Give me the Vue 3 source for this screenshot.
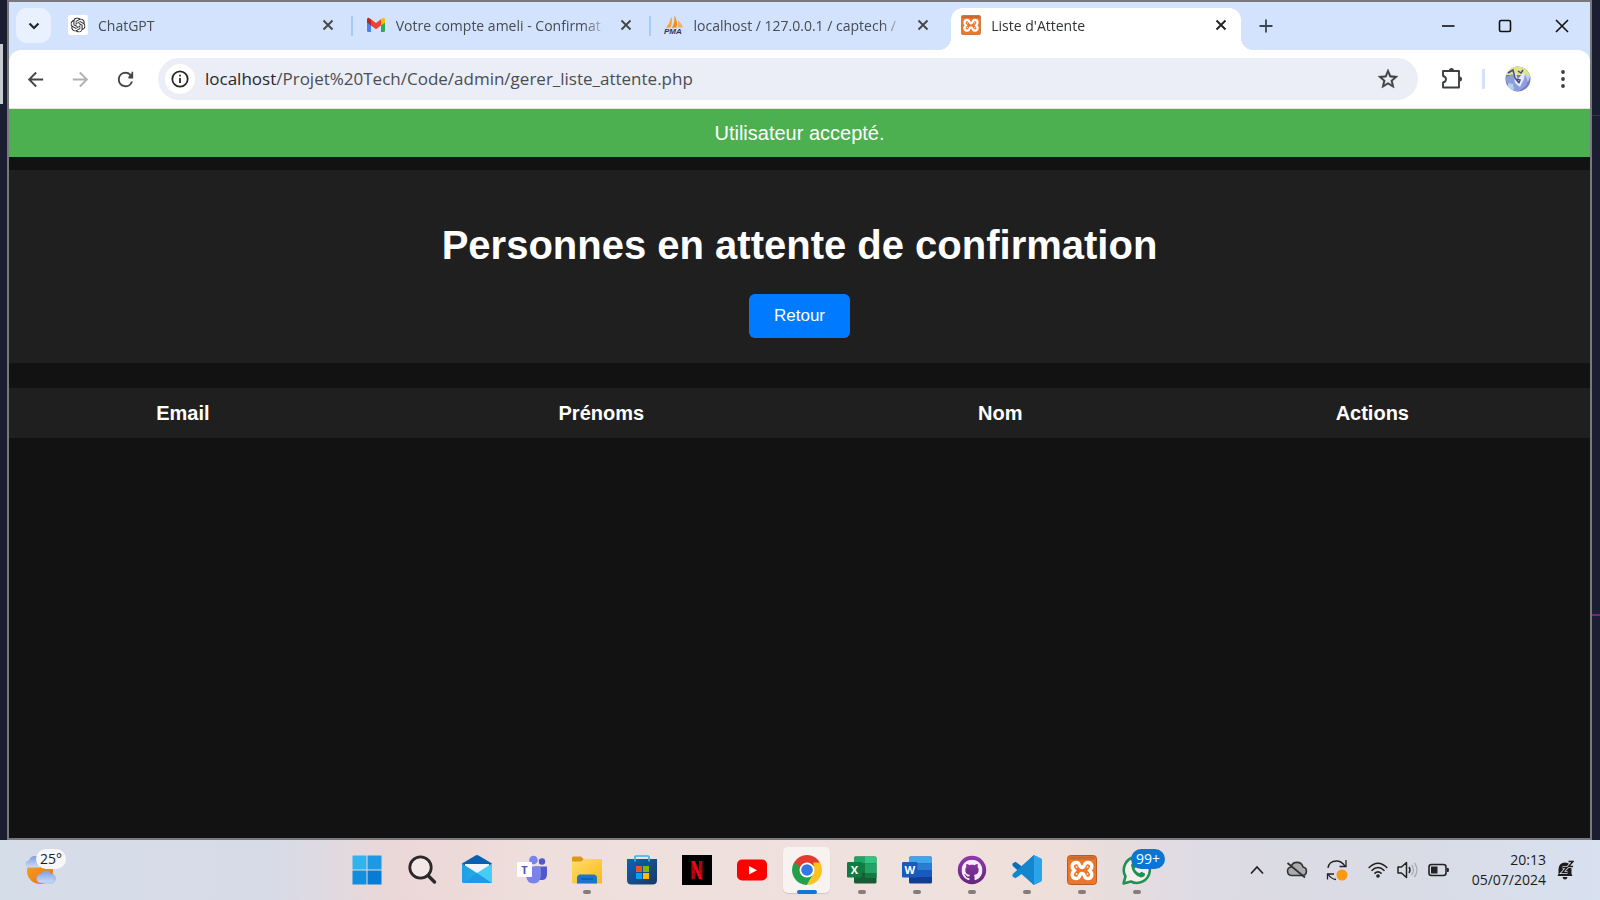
<script setup>
const columns = ['Email', 'Prénoms', 'Nom', 'Actions']
</script>

<template>
  <div class="desktop">
    <svg width="0" height="0" class="defs" aria-hidden="true">
      <defs>
        <linearGradient id="g-folder" x1="0" y1="0" x2="1" y2="1">
          <stop offset="0" stop-color="#ffdc6b" /><stop offset="1" stop-color="#fbb917" />
        </linearGradient>
        <linearGradient id="g-store" x1="0" y1="0" x2="1" y2="1">
          <stop offset="0" stop-color="#0c63b8" /><stop offset="1" stop-color="#1c3765" />
        </linearGradient>
        <linearGradient id="g-mail" x1="0" y1="0" x2="1" y2="0">
          <stop offset="0" stop-color="#1d9fe6" /><stop offset="1" stop-color="#2fb4f0" />
        </linearGradient>
        <linearGradient id="g-git" x1="0" y1="0" x2="0" y2="1">
          <stop offset="0" stop-color="#9238ad" /><stop offset="1" stop-color="#62277c" />
        </linearGradient>
        <linearGradient id="g-sun" x1="0" y1="0" x2="1" y2="1">
          <stop offset="0" stop-color="#f9a51f" /><stop offset="1" stop-color="#e86f17" />
        </linearGradient>
        <linearGradient id="g-cloud" x1="0" y1="0" x2="0" y2="1">
          <stop offset="0" stop-color="#7f9fdc" /><stop offset="1" stop-color="#c9dcfa" />
        </linearGradient>
        <symbol id="xampp" viewBox="0 0 30 30">
          <rect x="0.5" y="0.5" width="29" height="29" rx="3" fill="#ee762a" stroke="#b85c22" />
          <rect x="2" y="1.5" width="26" height="3" rx="1" fill="#c46a35" />
          <path d="M9.500 7.500C4.500 7.500 4 12.500 7.300 15.500C4 18.500 4.500 23.500 9.500 23.500C13.500 23.500 12 18.500 15 18.500C18 18.500 16.500 23.500 20.500 23.500C25.500 23.500 26 18.500 22.700 15.500C26 12.500 25.500 7.500 20.500 7.500C16.500 7.500 18 12.500 15 12.500C12 12.500 13.500 7.500 9.500 7.500Z" fill="none" stroke="#fff" stroke-width="3.4" />
          <path d="M9.500 11.200v1.600M9.500 18.200v1.600M20.500 11.200v1.600M20.500 18.200v1.600" stroke="#fff" stroke-width="1.500" />
        </symbol>
        <symbol id="cross" viewBox="0 0 12 12">
          <path d="M1.500 1.500l9 9M10.500 1.500l-9 9" fill="none" stroke="currentColor" stroke-width="1.9" />
        </symbol>
      </defs>
    </svg>

    <span class="edge-panel"></span>
    <span class="edge-line"></span>
    <span class="edge-accent"></span>

    <div class="window">
      <div class="tabstrip">
        <button class="tab-search" aria-label="Rechercher dans les onglets">
          <svg width="12" height="8" viewBox="0 0 12 8"><path d="M1.500 1.500L6 6l4.500-4.500" fill="none" stroke="#1f2733" stroke-width="2.2" /></svg>
        </button>
        <div class="tabs">
          <div class="tab">
            <svg class="favicon" viewBox="0 0 20 20">
              <rect width="20" height="20" rx="2" fill="#fff" />
              <svg x="2.500" y="2.500" width="15" height="15" viewBox="0 0 24 24"><path fill="#222" d="M22.2819 9.8211a5.9847 5.9847 0 0 0-.5157-4.9108 6.0462 6.0462 0 0 0-6.5098-2.9A6.0651 6.0651 0 0 0 4.9807 4.1818a5.9847 5.9847 0 0 0-3.9977 2.9 6.0462 6.0462 0 0 0 .7427 7.0966 5.98 5.98 0 0 0 .511 4.9107 6.051 6.051 0 0 0 6.5146 2.9001A5.9847 5.9847 0 0 0 13.2599 24a6.0557 6.0557 0 0 0 5.7718-4.2058 5.9894 5.9894 0 0 0 3.9977-2.9001 6.0557 6.0557 0 0 0-.7475-7.0729zm-9.022 12.6081a4.4755 4.4755 0 0 1-2.8764-1.0408l.1419-.0804 4.7783-2.7582a.7948.7948 0 0 0 .3927-.6813v-6.7369l2.02 1.1686a.071.071 0 0 1 .038.052v5.5826a4.504 4.504 0 0 1-4.4945 4.4944zm-9.6607-4.1254a4.4708 4.4708 0 0 1-.5346-3.0137l.142.0852 4.783 2.7582a.7712.7712 0 0 0 .7806 0l5.8428-3.3685v2.3324a.0804.0804 0 0 1-.0332.0615L9.74 19.9502a4.4992 4.4992 0 0 1-6.1408-1.6464zM2.3408 7.8956a4.485 4.485 0 0 1 2.3655-1.9728V11.6a.7664.7664 0 0 0 .3879.6765l5.8144 3.3543-2.0201 1.1685a.0757.0757 0 0 1-.071 0l-4.8303-2.7865A4.504 4.504 0 0 1 2.3408 7.872zm16.5963 3.8558L13.1038 8.364 15.1192 7.2a.0757.0757 0 0 1 .071 0l4.8303 2.7913a4.4944 4.4944 0 0 1-.6765 8.1042v-5.6772a.79.79 0 0 0-.407-.667zm2.0107-3.0231l-.142-.0852-4.7735-2.7818a.7759.7759 0 0 0-.7854 0L9.409 9.2297V6.8974a.0662.0662 0 0 1 .0284-.0615l4.8303-2.7866a4.4992 4.4992 0 0 1 6.6802 4.66zM8.3065 12.863l-2.02-1.1638a.0804.0804 0 0 1-.038-.0567V6.0742a4.4992 4.4992 0 0 1 7.3757-3.4537l-.142.0805L8.704 5.459a.7948.7948 0 0 0-.3927.6813zm1.0976-2.3654l2.602-1.4998 2.6069 1.4998v2.9994l-2.5974 1.4997-2.6067-1.4997Z" /></svg>
            </svg>
            <span class="tab-title">ChatGPT</span>
            <button class="tab-close" aria-label="Fermer ChatGPT"><svg width="12" height="12"><use href="#cross" /></svg></button>
          </div>
          <div class="tab">
            <svg class="favicon" viewBox="0 0 20 20">
              <path d="M1 4.500v11.200q0 1.300 1.300 1.300H5V7.500z" fill="#4285f4" />
              <path d="M19 4.500v11.200q0 1.300-1.300 1.300H15V7.500z" fill="#34a853" />
              <path d="M15 4.300L16.200 3.400Q19 1.800 19 5v2.500l-4 3z" fill="#fbbc04" />
              <path d="M5 4.300L3.800 3.400Q1 1.800 1 5v2.500l4 3z" fill="#c5221f" />
              <path d="M5 4.200l5 3.900 5-3.900v6.200l-5 3.800-5-3.800z" fill="#ea4335" />
            </svg>
            <span class="tab-title">Votre compte ameli - Confirmat</span>
            <button class="tab-close" aria-label="Fermer Votre compte ameli"><svg width="12" height="12"><use href="#cross" /></svg></button>
          </div>
          <div class="tab">
            <svg class="favicon" viewBox="0 0 20 20">
              <path d="M7.500 1.500Q8.500 8 6.500 12.500L2 13Q6 8 7.500 1.500z" fill="#f5a03a" />
              <path d="M10.500 0Q14 7 12.500 12.500L8 13Q11 7 10.500 0z" fill="#f29111" />
              <path d="M14 5Q18 9 19 12.500h-5.500Q15 9 14 5z" fill="#f5b05a" />
              <text x="0" y="18.500" font-size="8" font-weight="700" font-style="italic" fill="#34345c" font-family="Liberation Sans, sans-serif">PMA</text>
            </svg>
            <span class="tab-title">localhost / 127.0.0.1 / captech /</span>
            <button class="tab-close" aria-label="Fermer localhost"><svg width="12" height="12"><use href="#cross" /></svg></button>
          </div>
          <div class="tab active">
            <svg class="favicon" viewBox="0 0 30 30"><use href="#xampp" /></svg>
            <span class="tab-title">Liste d'Attente</span>
            <button class="tab-close" aria-label="Fermer Liste d'Attente"><svg width="12" height="12"><use href="#cross" /></svg></button>
          </div>
        </div>
        <button class="new-tab" aria-label="Nouvel onglet">
          <svg width="14" height="14" viewBox="0 0 14 14"><path d="M7 0.500v13M0.500 7h13" stroke="#3c4450" stroke-width="1.800" /></svg>
        </button>
        <div class="win-controls">
          <button aria-label="Réduire"><svg width="14" height="14" viewBox="0 0 14 14"><path d="M1 7h12.500" stroke="#111" stroke-width="1.600" /></svg></button>
          <button aria-label="Agrandir"><svg width="14" height="14" viewBox="0 0 14 14"><rect x="1.500" y="1.500" width="11" height="11" rx="1.500" fill="none" stroke="#111" stroke-width="1.600" /></svg></button>
          <button aria-label="Fermer"><svg width="14" height="14" viewBox="0 0 14 14"><path d="M1 1l12 12M13 1L1 13" stroke="#111" stroke-width="1.600" /></svg></button>
        </div>
      </div>

      <div class="toolbar">
        <div class="nav">
          <button aria-label="Retour"><svg width="23" height="23" viewBox="0 0 24 24"><path fill="#444746" d="M20 11H7.830l5.590-5.590L12 4l-8 8 8 8 1.410-1.410L7.830 13H20z" /></svg></button>
          <button aria-label="Avancer"><svg width="23" height="23" viewBox="0 0 24 24"><path fill="#b1b2b3" d="M4 11h12.170l-5.590-5.590L12 4l8 8-8 8-1.410-1.410L16.170 13H4z" /></svg></button>
          <button aria-label="Actualiser"><svg width="23" height="23" viewBox="0 0 24 24"><path fill="#444746" d="M17.650 6.350A7.960 7.960 0 0 0 12 4a8 8 0 1 0 7.730 10h-2.080A6 6 0 1 1 12 6c1.660 0 3.140.690 4.220 1.780L15 9v2H20V4h-1.700v1.700z" /></svg></button>
        </div>
        <div class="omnibox">
          <button class="site-info" aria-label="Informations sur le site">
            <svg width="18" height="18" viewBox="0 0 18 18"><circle cx="9" cy="9" r="7.700" fill="none" stroke="#26282b" stroke-width="1.800" /><path d="M9 8v5M9 4.800v1.800" stroke="#26282b" stroke-width="1.800" /></svg>
          </button>
          <a class="url" href="#"><b>localhost</b>/Projet%20Tech/Code/admin/gerer_liste_attente.php</a>
          <button class="star" aria-label="Ajouter aux favoris">
            <svg width="24" height="24" viewBox="0 0 24 24"><path fill="#3d4043" stroke="#3d4043" stroke-width="0.400" d="M22 9.240l-7.190-.620L12 2 9.190 8.630 2 9.240l5.460 4.730L5.820 21 12 17.270 18.180 21l-1.630-7.030zM12 15.400l-3.760 2.270 1-4.280-3.320-2.880 4.380-.380L12 6.100l1.710 4.040 4.380.380-3.320 2.880 1 4.280z" /></svg>
          </button>
        </div>
        <button class="ext" aria-label="Extensions">
          <svg width="22" height="22" viewBox="0 0 22 22"><path d="M2 3h16v16.500H2v-5q3-.500 3-3.200T2 8z" fill="none" stroke="#3d4043" stroke-width="1.900" stroke-linejoin="round" /><path d="M8 2.500a2.500 2.500 0 0 1 5 0zM18.500 8.500a2.500 2.500 0 0 1 0 5z" fill="#3d4043" /></svg>
        </button>
        <span class="bar-sep"></span>
        <button class="avatar" aria-label="Profil">
          <svg width="26" height="26" viewBox="0 0 26 26">
            <clipPath id="round"><circle cx="13" cy="13" r="12.500" /></clipPath>
            <g clip-path="url(#round)">
              <rect width="26" height="26" fill="#7777bd" /><path d="M0 0h26v11l-9-2H0z" fill="#dde588" />
              <path d="M0 12l7-4 7 6 5-6 5 5-3 7-8 6-8-3z" fill="#8c9fdc" />
              <path d="M8 4l3 4 2 5 4-5 3-1-1 6-4 8-5-4z" fill="#e6e9f8" />
              <path d="M3 7l5-3 2 8 4 5M13 5l3 2 2-3M11 13l4 1-1 3" fill="none" stroke="#484b88" stroke-width="1.500" />
              <path d="M3 17l5 1 1 6-6-1zM20 8l5 3-2 5z" fill="#b4d2f2" />
            </g>
          </svg>
        </button>
        <button class="more" aria-label="Menu"><svg width="6" height="20" viewBox="0 0 6 20"><g fill="#3d4043"><circle cx="3" cy="3" r="1.900" /><circle cx="3" cy="10" r="1.900" /><circle cx="3" cy="17" r="1.900" /></g></svg></button>
      </div>

      <main class="page">
        <p class="notice">Utilisateur accepté.</p>
        <header class="page-head">
          <h1>Personnes en attente de confirmation</h1>
          <button class="back">Retour</button>
        </header>
        <table>
          <thead>
            <tr><th v-for="c in columns" :key="c" scope="col">{{ c }}</th></tr>
          </thead>
        </table>
      </main>
    </div>

    <footer class="taskbar">
      <div class="weather">
        <svg width="32" height="30" viewBox="0 0 32 30">
          <circle cx="15" cy="16" r="13" fill="url(#g-sun)" />
          <path d="M4 12.500a3.500 3.500 0 0 1 0-7A6 6 0 0 1 15 4v8.500z" fill="url(#g-cloud)" />
          <path d="M16 28a4.500 4.500 0 0 1 0-9 5.500 5.500 0 0 1 10 0 4.500 4.500 0 0 1 0 9z" fill="url(#g-cloud)" stroke="#88a5da" stroke-width="0.500" />
        </svg>
        <span class="temp">25°</span>
      </div>

      <nav class="apps">
        <button aria-label="Démarrer"><svg viewBox="0 0 30 30"><rect x="0.500" y="0.500" width="14" height="14" rx="0.500" fill="#31b4ee" /><rect x="15.500" y="0.500" width="14" height="14" fill="#1c99e2" /><rect x="0.500" y="15.500" width="14" height="14" fill="#118edd" /><rect x="15.500" y="15.500" width="14" height="14" fill="#087cd5" /></svg></button>
        <button aria-label="Rechercher"><svg viewBox="0 0 30 30"><circle cx="13.500" cy="12.500" r="10.700" fill="#ffffff66" stroke="#2b2929" stroke-width="2.800" /><path d="M21 20.500l6.500 6.500" stroke="#2b2929" stroke-width="3.400" stroke-linecap="round" /></svg></button>
        <button aria-label="Courrier"><svg viewBox="0 0 30 30"><path d="M0 8.500L13.500.500q1.500-.800 3 0L30 8.500V14H0z" fill="#0a5fae" /><path d="M3 9h24v10H3z" fill="#f1f5fb" /><path d="M0 8.500L15 18l15 10H1.500Q0 28 0 26.500z" fill="url(#g-mail)" /><path d="M30 8.500L15 18l15 10z" fill="#45cdf7" /><path d="M15 18l15 10H2z" fill="#209be3" /></svg></button>
        <button aria-label="Teams"><svg viewBox="0 0 30 30"><circle cx="16.500" cy="5" r="4.300" fill="#7b83eb" /><circle cx="25" cy="6.500" r="3.200" fill="#5059c9" /><path d="M17 11.500h13v8.500q-.500 5-5 5h-5z" fill="#5059c9" /><path d="M9 11.500h13.500q1.500 0 1.500 1.500v8q-1 7.500-7.500 7.500T9 21z" fill="#7b83eb" /><rect x="0" y="7" width="15" height="15" rx="1" fill="#fff" /><text x="7.500" y="18.500" text-anchor="middle" font-size="11" font-weight="700" fill="#4b53bc" font-family="Open Sans, sans-serif">T</text></svg></button>
        <button class="running" aria-label="Explorateur de fichiers"><svg viewBox="0 0 30 30"><path d="M0 3q0-1.500 1.500-1.500H9L12 4.500V9H0z" fill="#d99a0b" /><path d="M0 6.500h9l3-2.500h17q1.500 0 1.500 1.500V27q0 1.500-1.500 1.500H1.500Q0 28.500 0 27z" fill="url(#g-folder)" /><path d="M5 28.500V23q0-3.500 3.500-3.500h13Q25 19.500 25 23v5.500z" fill="#1976cc" /><path d="M9 24h12" stroke="#0b57a0" stroke-width="1.200" /></svg></button>
        <button aria-label="Microsoft Store"><svg viewBox="0 0 30 30"><path d="M8 6V2q0-1 1-1h12q1 0 1 1v4" fill="none" stroke="#31b5ed" stroke-width="1.700" /><path d="M0 4h30v21q0 4.500-4.500 4.500h-21Q0 29.500 0 25z" fill="url(#g-store)" /><path d="M8 4v2.500M22 4v2.500" stroke="#31b5ed" stroke-width="1.700" /><path d="M9 11h6v6H9z" fill="#f25022" /><path d="M16 11h6v6h-6z" fill="#7fba00" /><path d="M9 18h6v6H9z" fill="#00a4ef" /><path d="M16 18h6v6h-6z" fill="#ffb900" /></svg></button>
        <button aria-label="Netflix"><svg viewBox="0 0 30 30"><rect width="30" height="30" fill="#000" /><path d="M9.500 6H13v18l-3.500.500zM17 6h3.500v18.500L17 24z" fill="#a90710" /><path d="M9.500 6H13l7.500 18.500L17 24z" fill="#e50914" /></svg></button>
        <button aria-label="YouTube"><svg viewBox="0 0 30 30"><rect x="0" y="4.500" width="30" height="21" rx="5" fill="#f00" /><path d="M12 11v8.500l8-4.250z" fill="#fff" /></svg></button>
        <button class="current" aria-label="Google Chrome"><svg viewBox="0 0 30 30"><path d="M15 15L2.010 7.500A15 15 0 0 1 27.990 7.500z" fill="#e33b2e" /><path d="M2.010 7.500A15 15 0 0 0 15 30L21.500 18.750 15 15z" fill="#23a04a" /><path d="M27.990 7.500A15 15 0 0 1 15 30L21.500 18.750V7.500z" fill="#fcc31e" /><path d="M2.010 7.500L8.500 18.750 15 15V7.500z" fill="#e33b2e" /><path d="M2.010 7.500L8.500 18.750 12 20 6 10z" fill="#23a04a" /><circle cx="15" cy="15" r="7.500" fill="#fff" /><circle cx="15" cy="15" r="5.800" fill="#3379e6" /></svg></button>
        <button class="running" aria-label="Excel"><svg viewBox="0 0 30 30"><rect x="7" y="1.500" width="22.500" height="27" rx="1.500" fill="#185c37" /><path d="M8.500 1.500H18v7H7V3q0-1.500 1.500-1.500z" fill="#21a366" /><path d="M18 1.500h10q1.500 0 1.500 1.500v5.500H18z" fill="#33c481" /><path d="M7 8.500h11V18H7z" fill="#107c41" /><path d="M18 8.500h11.500V18H18z" fill="#21a366" /><path d="M18 18h11.500v5H18z" fill="#107c41" /><rect x="0" y="7" width="15" height="15.500" rx="1.300" fill="#107c41" /><text x="7.500" y="18.800" text-anchor="middle" font-size="11" font-weight="700" fill="#fff" font-family="Open Sans, sans-serif">X</text></svg></button>
        <button class="running" aria-label="Word"><svg viewBox="0 0 30 30"><rect x="7" y="1.500" width="23" height="27" rx="1.500" fill="#103f91" /><path d="M8.500 1.500h20Q30 1.500 30 3v5.500H7V3q0-1.500 1.500-1.500z" fill="#41a5ee" /><path d="M7 8.500h23V15H7z" fill="#2b7cd3" /><path d="M7 15h23v7H7z" fill="#185abd" /><rect x="0" y="7" width="15.500" height="15.500" rx="1.300" fill="#185abd" /><text x="7.700" y="18.800" text-anchor="middle" font-size="11" font-weight="700" fill="#fff" font-family="Open Sans, sans-serif">W</text></svg></button>
        <button class="running" aria-label="GitHub Desktop"><svg viewBox="0 0 30 30"><circle cx="15" cy="15" r="14.200" fill="url(#g-git)" /><svg x="4.500" y="4.500" width="21" height="21" viewBox="0 0 24 24"><path fill="#f6ecf7" d="M12 .297c-6.630 0-12 5.373-12 12 0 5.303 3.438 9.800 8.205 11.385.600.113.820-.258.820-.577 0-.285-.010-1.040-.015-2.040-3.338.724-4.042-1.610-4.042-1.610C4.422 18.070 3.633 17.700 3.633 17.700c-1.087-.744.084-.729.084-.729 1.205.084 1.838 1.236 1.838 1.236 1.070 1.835 2.809 1.305 3.495.998.108-.776.417-1.305.760-1.605-2.665-.300-5.466-1.332-5.466-5.930 0-1.310.465-2.380 1.235-3.220-.135-.303-.540-1.523.105-3.176 0 0 1.005-.322 3.300 1.230.960-.267 1.980-.399 3-.405 1.020.006 2.040.138 3 .405 2.280-1.552 3.285-1.230 3.285-1.230.645 1.653.240 2.873.120 3.176.765.840 1.230 1.910 1.230 3.220 0 4.610-2.805 5.625-5.475 5.920.420.360.810 1.096.810 2.220 0 1.606-.015 2.896-.015 3.286 0 .315.210.690.825.570C20.565 22.092 24 17.592 24 12.297c0-6.627-5.373-12-12-12" /></svg></svg></button>
        <button class="running" aria-label="Visual Studio Code"><svg viewBox="0 0 30 30"><path d="M22 0L10 11.500 3.500 6.700 0.500 8.500v2.300L22 30V21.500z" fill="#0b6fb8" /><path d="M22 30L10 18.700 3.500 23.300 0.500 21.500v-2.300L22 0v8.500z" fill="#1287d0" /><path d="M22 0l6.500 3q1.500.700 1.500 2v20q0 1.300-1.500 2L22 30z" fill="#2ba4ee" /></svg></button>
        <button class="running" aria-label="XAMPP"><svg viewBox="0 0 30 30"><use href="#xampp" /></svg></button>
        <button class="running" aria-label="WhatsApp"><svg viewBox="0 0 30 30"><path d="M1.500 28.500l2-7.200A13 13 0 1 1 9 26.500z" fill="#f4efee" stroke="#219053" stroke-width="2.600" stroke-linejoin="round" /><path d="M9 10q1-3 3.500-1.500l1.500 3.500-1.500 2q2 3 5 4.300l2-1.600 3.500 1.800q.500 3.500-4 4Q10.500 20.500 9 10z" fill="#219053" /></svg><span class="badge">99+</span></button>
      </nav>

      <div class="tray">
        <button class="chev" aria-label="Icônes masquées"><svg width="14" height="10" viewBox="0 0 14 10"><path d="M1 8.500l6-6.500 6 6.500" fill="none" stroke="#222" stroke-width="1.700" /></svg></button>
        <svg class="cloud" width="22" height="18" viewBox="0 0 22 18"><path d="M5.500 14.500A4.300 4.300 0 0 1 5 6a6.200 6.200 0 0 1 12 0 4.300 4.300 0 0 1-.500 8.500z" fill="#aaaab0" stroke="#333" stroke-width="1.600" /><path d="M1.500 2L19 16.500" stroke="#333" stroke-width="1.800" /></svg>
        <svg class="sync" width="22" height="22" viewBox="0 0 22 22"><path d="M2 9Q3 2 10.500 2q5 0 8.500 5M20 1v6.500h-6.500M1.500 20.500V15H8M2 15q3 5 8 5.500" fill="none" stroke="#222" stroke-width="1.300" /><circle cx="16" cy="16" r="5.500" fill="#fb9a10" /></svg>
        <svg class="wifi" width="20" height="16" viewBox="0 0 20 16"><g fill="none" stroke="#222" stroke-width="1.500"><path d="M.700 6Q10-3.500 19.300 6" /><path d="M3.500 8.800q6.500-6.500 13 0" /><path d="M6.400 11.600q3.600-3.500 7.200 0" /></g><circle cx="10" cy="14" r="1.800" fill="#222" /></svg>
        <svg class="volume" width="22" height="18" viewBox="0 0 22 18"><path d="M1 6h3.500l5-4.500v15l-5-4.500H1z" fill="none" stroke="#222" stroke-width="1.500" stroke-linejoin="round" /><path d="M12 6q2 3 0 6" fill="none" stroke="#222" stroke-width="1.400" /><path d="M14.500 4q4 5 0 10M17.500 2q5 7 0 14" fill="none" stroke="#aaaab2" stroke-width="1.300" /></svg>
        <svg class="battery" width="22" height="14" viewBox="0 0 22 14"><rect x="1" y="1.500" width="17" height="11" rx="2.500" fill="none" stroke="#222" stroke-width="1.600" /><rect x="3" y="3.500" width="6.500" height="7" fill="#222" /><path d="M19 5h1.500q1 2 0 4H19z" fill="#222" /></svg>
        <time class="clock" datetime="2024-07-05T20:13">20:13<br />05/07/2024</time>
        <svg class="bell" width="18" height="20" viewBox="0 0 18 20"><path d="M2.500 14V9Q3 2.500 9 2.500T15.500 9v5l1 2h-15zM6.500 17h5q-.500 2.500-2.500 2.500T6.500 17z" fill="#1c1c1c" /><path d="M6.500 7.500h4.500l-4.500 5h5M12.500 1.500H17l-4.500 5H17" fill="none" stroke="#d9dfec" stroke-width="3" /><path d="M6.500 7.500h4.500l-4.500 5h5M12.500 1.500H17l-4.500 5H17" fill="none" stroke="#1c1c1c" stroke-width="1.400" /></svg>
      </div>
    </footer>
  </div>
</template>

<style>
html, body { margin: 0; background: #1b1d30; }
</style>

<style scoped>
* { box-sizing: border-box; }
button { margin: 0; padding: 0; border: 0; background: none; font: inherit; color: inherit; cursor: pointer; }
svg { display: block; flex: none; }
.defs { position: absolute; }

.desktop {
  position: relative;
  display: flex;
  flex-direction: column;
  min-height: 100vh;
  background: #1b1d30;
  font-family: "Open Sans", "Noto Sans", sans-serif;
}
.edge-panel { position: absolute; left: 0; top: 44px; width: 3px; height: 60px; background: #c8cbd0; }
.edge-line { position: absolute; right: 0; top: 115px; width: 8px; height: 1px; background: #34374c; }
.edge-accent { position: absolute; right: 0; top: 614px; width: 8px; height: 2px; background: #7c1f86; }

.window {
  flex: 1;
  display: flex;
  flex-direction: column;
  margin: 0 8px 0 7px;
  border: 2px solid #77797c;
  background: #d3e2fd;
}

.tabstrip { display: flex; align-items: stretch; height: 48px; }
.tab-search {
  flex: none;
  display: grid;
  place-items: center;
  width: 35px;
  height: 35px;
  margin: 6px 3px 0 7px;
  border-radius: 11px;
  background: #eaf1fe;
}
.tabs { flex: 0 1 1192px; display: flex; min-width: 0; }
.tab {
  position: relative;
  flex: 1 1 0;
  min-width: 0;
  display: flex;
  align-items: center;
  padding: 0 18px 0 14px;
  color: #474b52;
  font-size: 14px;
}
.tab:not(:nth-last-child(-n+2))::after {
  content: "";
  position: absolute;
  right: -1px;
  top: 14px;
  width: 2px;
  height: 20px;
  background: #a9c8fb;
}
.favicon { width: 20px; height: 20px; margin: 0 10px 2px 0; }
.tab-title {
  flex: 1;
  min-width: 0;
  margin-right: 12px;
  overflow: hidden;
  white-space: nowrap;
  line-height: 24px;
  -webkit-mask-image: linear-gradient(90deg, #000 calc(100% - 24px), transparent);
  mask-image: linear-gradient(90deg, #000 calc(100% - 24px), transparent);
}
.tab-close { flex: none; color: #444746; padding-bottom: 2px; }
.tab.active {
  margin: 6px 5px 0 4px;
  padding: 0 14px 6px 10px;
  border-radius: 12px 12px 0 0;
  background: #fff;
  color: #303236;
}
.tab.active .tab-close { color: #222; }
.tab.active::before, .tab.active::after {
  content: "";
  position: absolute;
  bottom: 0;
  width: 12px;
  height: 12px;
}
.tab.active::before { left: -12px; background: radial-gradient(circle at 0 0, transparent 12px, #fff 12px); }
.tab.active::after { right: -12px; background: radial-gradient(circle at 100% 0, transparent 12px, #fff 12px); }
.new-tab { flex: none; width: 40px; display: grid; place-items: center; }
.win-controls { display: flex; margin-left: auto; }
.win-controls button { width: 57px; display: grid; place-items: center; }

.toolbar {
  display: flex;
  align-items: center;
  height: 59px;
  padding: 0 24px 0 4px;
  border-radius: 12px 12px 0 0;
  border-bottom: 1px solid #dfe8dd;
  background: #fff;
}
.nav { display: flex; }
.nav button { width: 45px; display: grid; place-items: center; }
.omnibox {
  flex: 1;
  min-width: 0;
  display: flex;
  align-items: center;
  height: 42px;
  margin-left: 10px;
  padding: 0 18px 0 7px;
  border-radius: 21px;
  background: #ebeef7;
}
.site-info { display: grid; place-items: center; width: 30px; height: 30px; border-radius: 50%; background: #fff; }
.url {
  flex: 1;
  min-width: 0;
  margin-left: 10px;
  overflow: hidden;
  white-space: nowrap;
  color: #4a4d52;
  text-decoration: none;
  font-size: 17px;
  line-height: 24px;
}
.url b { font-weight: 400; color: #26282c; }
.ext { margin-left: 23px; }
.bar-sep { width: 3px; height: 20px; margin: 0 20px 0 19px; background: #d3e2fd; }
.more { margin-left: 29px; }

.page { flex: 1; background: #121212; color: #fff; font-family: "Liberation Sans", Arial, sans-serif; }
.notice { margin: 0; padding: 12px; background: #4caf50; text-align: center; font-size: 20px; line-height: 24px; }
.page-head { margin: 13px 0 25px; padding: 49px 0 25px; background: #1f1f1f; text-align: center; }
h1 { margin: 0 0 23px; font-size: 40px; line-height: 52px; }
.back { padding: 12px 25px; border-radius: 6px; background: #007bff; font-size: 17px; line-height: 20px; }
table { width: 100%; border-collapse: collapse; background: #1f1f1f; }
th { padding: 13px; font-size: 20px; line-height: 24px; text-align: center; }

.taskbar {
  display: flex;
  align-items: center;
  height: 60px;
  color: #1c1c1e;
  background: linear-gradient(90deg, #d5dde9 0, #d7dbe7 17%, #ebd7d7 25%, #eedfdc 34%, #efe1dd 58%, #efdfda 66%, #dddbe4 75%, #d9dbe5 88%, #d8e1f0 100%);
}
.weather { position: relative; flex: 0 1 339px; padding-left: 25px; }
.temp {
  position: absolute;
  left: 36px;
  top: -6px;
  padding: 0 4px;
  border-radius: 10px;
  background: #f7f8fb;
  font-size: 14px;
  line-height: 20px;
}
.apps { display: flex; align-self: stretch; }
.apps button { position: relative; width: 55px; display: grid; place-items: center; }
.apps button > svg { position: relative; width: 30px; height: 30px; }
.apps .running::after, .apps .current::after {
  content: "";
  position: absolute;
  bottom: 6px;
  width: 8px;
  height: 4px;
  border-radius: 2px;
  background: #857c7b;
}
.apps .current::after { width: 20px; background: #0f78d4; }
.apps .current::before {
  content: "";
  position: absolute;
  inset: 7px 4px;
  border-radius: 5px;
  background: #f8f2f0;
  box-shadow: 0 1px 1px #cfc3c1;
}
.badge {
  position: absolute;
  left: 22px;
  top: 9px;
  padding: 0 5px;
  border-radius: 10px;
  background: #0b76d1;
  color: #fff;
  font-size: 14px;
  line-height: 20px;
}
.tray { display: flex; align-items: center; margin-left: auto; padding-right: 26px; }
.cloud { margin-left: 22px; }
.sync { margin-left: 18px; }
.wifi { margin-left: 20px; }
.volume { margin-left: 9px; }
.battery { margin-left: 9px; }
.clock { margin-left: 22px; text-align: right; font-size: 14px; line-height: 20px; }
.bell { margin-left: 10px; }
</style>
